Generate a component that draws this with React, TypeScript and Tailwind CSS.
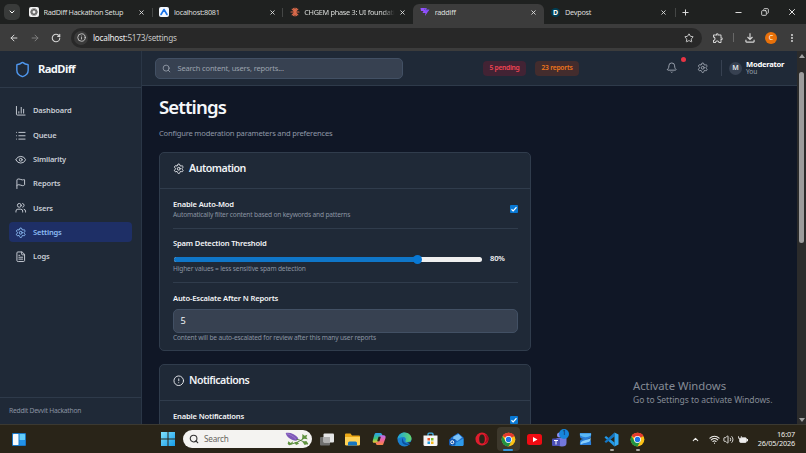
import React from "react";
import {
  ArrowLeft, ArrowRight, RotateCw, Info, Star, EllipsisVertical, X, Plus, Minus, ChevronDown, ChevronUp,
  ChartColumn, List, Eye, Flag, Users, Settings, FileText, Shield, Search, Bell, CircleAlert, Copy, Wifi, Volume2,
} from "lucide-react";
import { MdOutlineExtension, MdOutlineFileDownload } from "react-icons/md";

type Kids = { children?: React.ReactNode };

function Tab({ icon, title, active, wide }: { icon: React.ReactNode; title: React.ReactNode; active?: boolean; wide?: boolean }) {
  return (
    <div
      className={
        "flex h-full w-[130.4px] shrink-0 items-center pl-[7px] pr-[7px] " +
        (active ? "mt-[8px] rounded-t-[6px] bg-[#3c3c3c] pb-[8px]" : "")
      }
    >
      <div className="flex w-[10px] shrink-0 justify-center">{icon}</div>
      <div
        className={
          "ml-[4.5px] flex-1 overflow-hidden text-[7.3px] leading-[12px] tracking-[-0.27px] whitespace-nowrap text-[#dcdedc] " +
          (wide ? "mr-[4px] [mask-image:linear-gradient(to_right,black_85%,transparent)]" : "")
        }
      >
        {title}
      </div>
      <X className="size-[7px] shrink-0 text-[#e2e2e2]" strokeWidth={3} />
    </div>
  );
}

function TabStrip() {
  return (
    <div className="flex h-[24px] shrink-0 items-center overflow-hidden bg-[#1f2120]">
      <div className="ml-[4px] flex size-[16px] items-center justify-center rounded-[5px] bg-[#393b3a]">
        <ChevronDown className="size-[8px] text-white" strokeWidth={3} />
      </div>
      <div className="flex h-full items-center pl-[2px]">
        <Tab
          title="RadDiff Hackathon Setup"
          icon={
            <svg viewBox="0 0 20 20" className="size-[10px]">
              <rect width="20" height="20" rx="4" fill="#f1f1f1" />
              <g fill="none" stroke="#555" strokeWidth="1.5">
                <ellipse cx="10" cy="10" rx="7" ry="4" />
                <ellipse cx="10" cy="10" rx="7" ry="4" transform="rotate(60 10 10)" />
                <ellipse cx="10" cy="10" rx="7" ry="4" transform="rotate(120 10 10)" />
              </g>
            </svg>
          }
        />
        <div className="-mx-[0.5px] h-[9px] w-px bg-[#444645]" />
        <Tab
          title="localhost:8081"
          icon={
            <svg viewBox="0 0 20 20" className="size-[10px]">
              <rect width="20" height="20" rx="4" fill="#f4f8ff" />
              <path d="M4 15 10 5l6 10" fill="none" stroke="#1a73e8" strokeWidth="3.2" strokeLinejoin="round" strokeLinecap="round" />
            </svg>
          }
        />
        <div className="-mx-[0.5px] h-[9px] w-px bg-[#444645]" />
        <Tab
          wide
          title="CHGEM phase 3: UI foundation"
          icon={
            <svg viewBox="0 0 20 20" className="size-[10px]" stroke="#d9694a" strokeWidth="2.2" strokeLinecap="round">
              <path d="M10 2v16M2 10h16M4.3 4.3l11.4 11.4M15.7 4.3 4.3 15.7M7 2.8l6 14.4M13 2.8 7 17.2" />
            </svg>
          }
        />
        <Tab
          active
          title="raddiff"
          icon={
            <svg viewBox="0 0 20 20" className="size-[10px]">
              <path d="M1 2h9l-1 4h9l-8 12 1-6H5l2-4H2z" fill="#9450ff" />
              <path d="M10 2h4l-2 3h7l-3 4h-6z" fill="#7d4df0" />
            </svg>
          }
        />
        <Tab
          title="Devpost"
          icon={
            <div className="flex size-[9px] items-center justify-center rounded-full bg-[#003e54] text-[7px] leading-none font-bold text-white">D</div>
          }
        />
      </div>
      <div className="ml-px h-[9px] w-px bg-[#444645]" />
      <Plus className="ml-[5px] size-[9px] text-[#dedede]" strokeWidth={2.6} />
      <div className="ml-auto flex items-center gap-[18px] pr-[9px] text-[#e6e6e6]">
        <Minus className="size-[9px]" strokeWidth={2.5} />
        <Copy className="size-[8px] -scale-x-100" strokeWidth={2.6} />
        <X className="size-[10px]" strokeWidth={2.4} />
      </div>
    </div>
  );
}

function Toolbar() {
  return (
    <div className="flex h-[27px] shrink-0 items-center bg-[#3c3c3c] text-[#d6d6d6]">
      <ArrowLeft className="ml-[9px] size-[10px]" strokeWidth={2.4} />
      <ArrowRight className="ml-[11px] size-[10px] text-[#7d7d7d]" strokeWidth={2.4} />
      <RotateCw className="ml-[11px] size-[10px]" strokeWidth={2.6} />
      <div className="ml-[10px] flex h-[20px] w-[631px] items-center rounded-full bg-[#282828] pr-[8px] pl-[3px]">
        <div className="flex size-[14px] items-center justify-center rounded-full bg-[#3a3a3a]">
          <Info className="size-[9px]" strokeWidth={2.2} />
        </div>
        <div className="ml-[5px] flex-1 text-[8.2px] leading-[12px] tracking-[-0.24px] text-[#c4c4c4]">
          <span className="text-[#ededed]">localhost:</span>5173/settings
        </div>
        <Star className="size-[10px]" strokeWidth={2.2} />
      </div>
      <MdOutlineExtension className="ml-[10px] size-[12px]" />
      <div className="ml-[9px] h-[9px] w-px bg-[#686868]" />
      <MdOutlineFileDownload className="ml-[9px] size-[14px]" />
      <div className="ml-[8px] flex size-[12px] items-center justify-center rounded-full bg-[#e8710a] text-[7px] leading-none text-white">C</div>
      <EllipsisVertical className="ml-[10px] size-[10px]" strokeWidth={3} />
    </div>
  );
}

const nav = [
  { icon: ChartColumn, label: "Dashboard" },
  { icon: List, label: "Queue" },
  { icon: Eye, label: "Similarity" },
  { icon: Flag, label: "Reports" },
  { icon: Users, label: "Users" },
  { icon: Settings, label: "Settings" },
  { icon: FileText, label: "Logs" },
];

function Sidebar() {
  return (
    <aside className="flex w-[142px] shrink-0 flex-col border-r border-[#2a3646] bg-[#1f2937]">
      <div className="flex h-[37px] shrink-0 items-center border-b border-[#2e3a4a] pl-[14px]">
        <Shield className="size-[17px] text-[#4f97ee]" strokeWidth={2} />
        <span className="ml-[7px] pt-px text-[11.2px] font-bold tracking-[-0.6px] text-[#f5f7fa]">RadDiff</span>
      </div>
      <nav className="flex flex-1 flex-col gap-[4.3px] pt-[13px] pr-[9px] pl-[9px]">
        {nav.map(({ icon: Icon, label }) => (
          <div
            key={label}
            className={
              "flex h-[20px] items-center rounded-[4px] pl-[6px] text-[7.5px] font-semibold tracking-[-0.16px] " +
              (label === "Settings" ? "bg-[#1e2f66] text-[#8dbdf5]" : "text-[#c9ced6]")
            }
          >
            <Icon className="size-[11.5px]" strokeWidth={2} />
            <span className="ml-[6.5px]">{label}</span>
          </div>
        ))}
      </nav>
      <div className="flex h-[27px] shrink-0 items-center border-t border-[#2e3a4a] pt-px pl-[9px] text-[6.7px] tracking-[-0.22px] text-[#8a93a2]">
        Reddit Devvit Hackathon
      </div>
    </aside>
  );
}

function Header() {
  return (
    <header className="flex h-[35px] shrink-0 items-center border-b border-[#2e3a4a] bg-[#1f2937]">
      <div className="ml-[13px] flex h-[21px] w-[248px] items-center rounded-[5px] border border-[#425064] bg-[#374151] pl-[6px]">
        <Search className="size-[9px] text-[#9ca3af]" strokeWidth={2.2} />
        <span className="ml-[6.5px] pt-px text-[7.5px] tracking-[-0.16px] text-[#9ca3af]">Search content, users, reports...</span>
      </div>
      <div className="ml-[80px] flex h-[15px] w-[43px] items-center justify-center rounded-[4px] bg-[#422334] pt-px text-[6.7px] font-semibold tracking-[-0.3px] text-[#f04453]">
        5 pending
      </div>
      <div className="ml-[9px] flex h-[15px] w-[44px] items-center justify-center rounded-[4px] bg-[#432c2d] pt-px text-[6.7px] font-semibold tracking-[-0.22px] text-[#ee761c]">
        23 reports
      </div>
      <div className="relative ml-[87px]">
        <Bell className="size-[11.5px] text-[#9ca3af]" strokeWidth={2} />
        <span className="absolute -top-[5.5px] left-[15px] size-[5px] rounded-full bg-[#e83444]" />
      </div>
      <Settings className="ml-[19px] size-[11.5px] text-[#9ca3af]" strokeWidth={2} />
      <div className="ml-[13px] h-[16px] w-px bg-[#374151]" />
      <div className="ml-[7px] flex size-[13px] items-center justify-center rounded-full bg-[#374151] text-[7px] font-semibold text-[#e3e6ea]">M</div>
      <div className="ml-[4px] flex flex-col">
        <span className="text-[7.6px] leading-[8.5px] font-bold tracking-[-0.25px] text-white">Moderator</span>
        <span className="text-[6.6px] leading-[8px] tracking-[-0.1px] text-[#9ca3af]">You</span>
      </div>
    </header>
  );
}

function Card({ icon, title, children, className }: Kids & { icon: React.ReactNode; title: string; className: string }) {
  return (
    <section className={"w-[372px] shrink-0 rounded-[5px] border border-[#303c4c] bg-[#1f2937] " + className}>
      <div className="flex h-[36px] items-center border-b border-[#303c4c] pb-[4px] pl-[13px] text-[#e5e7eb]">
        {icon}
        <h2 className="ml-[4.5px] text-[10.6px] font-semibold tracking-[-0.48px] text-[#f0f2f5]">{title}</h2>
      </div>
      <div className="pr-[12px] pl-[13px]">{children}</div>
    </section>
  );
}

const Label = ({ children }: Kids) => (
  <div className="text-[7.6px] leading-[11px] font-semibold tracking-[-0.17px] text-[#f3f4f6]">{children}</div>
);
const Hint = ({ children }: Kids) => (
  <div className="text-[6.6px] leading-[10px] tracking-[-0.16px] text-[#8b94a2]">{children}</div>
);
const Check = () => (
  <svg viewBox="0 0 16 16" className="size-[8px]">
    <rect width="16" height="16" rx="2" fill="#0878d4" />
    <path d="m3 8.5 3.3 3.3L13 4.5" fill="none" stroke="#fff" strokeWidth="2.3" />
  </svg>
);

function Content() {
  return (
    <main className="flex min-h-0 flex-1 flex-col overflow-hidden bg-[#101726] pl-[17px]">
      <h1 className="mt-[8px] h-[26px] text-[18.6px] leading-[26px] font-semibold tracking-[-0.9px] text-[#f5f7fa]">Settings</h1>
      <p className="mt-[7px] text-[7.6px] leading-[12px] tracking-[-0.19px] text-[#8f98a6]">Configure moderation parameters and preferences</p>
      <Card className="mt-[13px] h-[199px]" title="Automation" icon={<Settings className="size-[11.5px]" strokeWidth={2} />}>
        <div className="flex h-[40px] items-center justify-between border-b border-[#303c4c]">
          <div className="pt-px">
            <Label>Enable Auto-Mod</Label>
            <Hint>Automatically filter content based on keywords and patterns</Hint>
          </div>
          <Check />
        </div>
        <div className="h-[54px] border-b border-[#303c4c] pt-[9px]">
          <Label>Spam Detection Threshold</Label>
          <div className="mt-[5px] flex h-[10px] items-center pl-px">
            <div className="flex h-[5px] w-[308px] items-center rounded-full bg-[#efefef]">
              <div className="h-[5px] w-[240px] rounded-l-full bg-[#0f76c8]" />
              <div className="-ml-[1px] size-[9px] rounded-full bg-[#0878d4]" />
            </div>
            <span className="ml-[8px] text-[7.6px] font-semibold tracking-[-0.2px] text-[#f3f4f6]">80%</span>
          </div>
          <Hint>Higher values = less sensitive spam detection</Hint>
        </div>
        <div className="pt-[10px]">
          <Label>Auto-Escalate After N Reports</Label>
          <div className="mt-[5px] flex h-[24px] items-center rounded-[5px] border border-[#425064] bg-[#374151] pl-[6.5px] text-[9.2px] text-[#f3f4f6]">5</div>
          <Hint>Content will be auto-escalated for review after this many user reports</Hint>
        </div>
      </Card>
      <Card className="mt-[13px] h-[120px]" title="Notifications" icon={<CircleAlert className="size-[11.5px]" strokeWidth={2} />}>
        <div className="flex h-[38px] items-center justify-between">
          <div className="pt-px pb-[8px]">
            <Label>Enable Notifications</Label>
          </div>
          <Check />
        </div>
      </Card>
    </main>
  );
}

function Scrollbar() {
  return (
    <div className="flex w-[9px] shrink-0 flex-col items-center justify-between bg-[#2b2b2b] py-[3px]">
      <div className="flex flex-col items-center">
        <div className="h-0 w-0 border-x-[3px] border-b-[4px] border-x-transparent border-b-[#a0a0a0]" />
        <div className="mt-[14px] h-[171px] w-[5px] rounded-full bg-[#9c9c9c]" />
      </div>
      <div className="-mb-px h-0 w-0 border-x-[3px] border-t-[4px] border-x-transparent border-t-[#a0a0a0]" />
    </div>
  );
}

const Slot = ({ children }: Kids) => <div className="flex w-[25.9px] shrink-0 items-center justify-center">{children}</div>;

const Chrome = () => (
  <svg viewBox="0 0 48 48" className="size-[15px]">
    <circle cx="24" cy="24" r="22" fill="#fbc116" />
    <path d="M24 24 4.9 13A22 22 0 0 1 43 13z" fill="#e33b2e" />
    <path d="M24 2a22 22 0 0 1 19 11H24z" fill="#e33b2e" />
    <path d="M4.9 13A22 22 0 0 0 24 46l9.5-16.5L14.5 29.5z" fill="#229342" />
    <circle cx="24" cy="24" r="11" fill="#fff" />
    <circle cx="24" cy="24" r="8.5" fill="#1a73e8" />
  </svg>
);

function Taskbar() {
  return (
    <footer className="flex h-[29px] shrink-0 items-center border-t border-[#3b3931] bg-[#292418]">
      <svg viewBox="0 0 28 26" className="ml-[12px] h-[13px] w-[14px]">
        <rect width="28" height="26" rx="2" fill="#1976c5" />
        <rect x="2" y="2" width="11" height="22" rx="1" fill="#f5f9fd" />
        <rect x="15" y="2" width="11" height="12" rx="1" fill="#62cdfa" />
        <rect x="15" y="14" width="11" height="10" rx="1" fill="#2292e8" />
      </svg>
      <svg viewBox="0 0 28 28" className="ml-[135px] size-[14px]">
        <defs>
          <linearGradient id="win" x1="0" y1="0" x2="1" y2="1"><stop stopColor="#7fe0fb" /><stop offset="1" stopColor="#159be8" /></linearGradient>
        </defs>
        <path d="M0 0h13v13H0zM15 0h13v13H15zM0 15h13v13H0zM15 15h13v13H15z" fill="url(#win)" />
      </svg>
      <div className="ml-[8px] flex h-[18px] w-[129px] items-center rounded-full bg-[#f4f3f1] pl-[6px]">
        <Search className="size-[10px] text-[#333]" strokeWidth={2.6} />
        <span className="ml-[5px] flex-1 text-[8.2px] tracking-[-0.2px] text-[#68665f]">Search</span>
        <svg viewBox="0 0 72 42" className="mr-[3px] h-[14px] w-[24px]">
          <path d="M2 3c11-3 29 2 38 16l-6 7C18 25 5 16 2 3z" fill="#7e57b8" />
          <path d="M5 5c10 2 19 7 28 17" stroke="#9b7acb" strokeWidth="3" fill="none" />
          <path d="M35 22c10 1 21 7 33 15M10 36c18 0 35-6 53-24" stroke="#41732b" strokeWidth="2.5" fill="none" />
          <path d="m52 6 7 5 8-3-3 8 4 6-10-2-8 4 2-8zM10 28l7 5 7-5-2 9-9 3-5-5zM28 31l9-2 5 6-9 4zM52 29l12-2 6 8-11 4z" fill="#60923f" />
        </svg>
      </div>
      <div className="flex h-full items-stretch pl-[2px]">
        <Slot>
          <svg viewBox="0 0 28 26" className="h-[13px] w-[14px]"><rect y="8" width="20" height="17" rx="2" fill="#6f6f6e" /><rect x="7" y="1" width="21" height="18" rx="2" fill="#e6e6e6" /><path d="M7 8h13v11H7z" fill="#b0b0b0" /></svg>
        </Slot>
        <Slot>
          <svg viewBox="0 0 30 26" className="h-[13px] w-[15px]"><path d="M0 3q0-2 2-2h9l3 4h14q2 0 2 2v17H0z" fill="#eca816" /><path d="M0 8h30v14q0 3-3 3H3q-3 0-3-3z" fill="#ffd257" /><path d="M6 25v-5q0-3 3-3h12q3 0 3 3v5z" fill="#1676c0" /></svg>
        </Slot>
        <Slot>
          <svg viewBox="0 0 30 30" className="size-[14px]">
            <defs><linearGradient id="cop" x1="0" y1="0" x2="0" y2="1"><stop stopColor="#2a9df4" /><stop offset=".55" stopColor="#3bc77b" /><stop offset="1" stopColor="#f3cb2d" /></linearGradient>
              <linearGradient id="cop2" x1="0" y1="0" x2="0" y2="1"><stop stopColor="#b36ff0" /><stop offset=".5" stopColor="#f0639a" /><stop offset="1" stopColor="#f78a3d" /></linearGradient></defs>
            <path d="M8 2h10q3 0 4 4l1 3h-6l-4 14H5q-5 0-3-6L5 6q1-4 3-4z" fill="url(#cop)" />
            <path d="M22 28H12q-3 0-4-4l-1-2h6l4-15h8q5 0 4 6l-4 11q-1 4-3 4z" fill="url(#cop2)" />
            <path d="m14 10-3 10h5l3-10z" fill="#292418" />
          </svg>
        </Slot>
        <Slot>
          <svg viewBox="0 0 30 30" className="size-[15px]">
            <defs><linearGradient id="edg" x1="0" y1="0" x2="1" y2="0"><stop stopColor="#1ba4e0" /><stop offset="1" stopColor="#65d868" /></linearGradient></defs>
            <circle cx="15" cy="15" r="14" fill="#1a7fcf" />
            <path d="M1 14C2 6 8 1 15 1c8 0 14 6 14 12 0 5-4 7-8 7-3 0-5-1-4-3 2-3 0-7-5-7-5 0-9 2-11 4z" fill="url(#edg)" />
            <path d="M12 12c-5 5-1 14 7 14 3 0 6-1 8-3-2 1-5 1-8 0-5-1-8-6-7-11z" fill="#0d4f9c" />
            <path d="M20 21q6 1 10-3v5l-4 1z" fill="#292418" />
          </svg>
        </Slot>
        <Slot>
          <svg viewBox="0 0 30 30" className="size-[15px]"><path d="M10 8V4q0-2 2-2h6q2 0 2 2v4" fill="none" stroke="#42b3ea" strokeWidth="2.5" /><path d="M1 7h28v18q0 3-3 3H4q-3 0-3-3z" fill="#f5f5f5" /><path d="M9 12h5v5H9z" fill="#e8532b" /><path d="M16 12h5v5h-5z" fill="#7db928" /><path d="M9 19h5v5H9z" fill="#1f9bde" /><path d="M16 19h5v5h-5z" fill="#f6b81c" /></svg>
        </Slot>
        <Slot>
          <svg viewBox="0 0 30 30" className="size-[15px]"><path d="M3 12 18 2l11 9v14q0 3-3 3H7q-3 0-4-3z" fill="#1b6fd0" /><path d="m9 9 10-5 7 7-9 7-9-5z" fill="#7cc4f8" /><path d="m5 26 24-13v12q0 3-3 3H7z" fill="#2f9bea" /><rect y="14" width="13" height="13" rx="2" fill="#1257ae" /><circle cx="6.5" cy="20.5" r="3" fill="none" stroke="#fff" strokeWidth="2" /></svg>
        </Slot>
        <Slot>
          <svg viewBox="0 0 30 30" className="size-[14px]"><circle cx="15" cy="15" r="14" fill="#df1d2d" /><path d="M20 5q9 9 0 20 9-3 9-10T20 5z" fill="#a80d20" /><ellipse cx="15" cy="15" rx="6" ry="9.8" fill="#292418" /></svg>
        </Slot>
        <Slot>
          <div className="flex h-[24px] w-[23px] flex-col items-center justify-between rounded-[4px] bg-[#3d382c] pt-[4.5px]">
            <Chrome />
            <div className="h-[2px] w-[10px] rounded-full bg-[#3497dc]" />
          </div>
        </Slot>
        <Slot>
          <svg viewBox="0 0 30 22" className="h-[11px] w-[15px]"><rect width="30" height="22" rx="5" fill="#f00b12" /><path d="m12 6 9 5-9 5z" fill="#fff" /></svg>
        </Slot>
        <Slot>
          <div className="relative flex">
            <svg viewBox="0 0 30 30" className="size-[15px]"><circle cx="15" cy="6" r="5" fill="#8b8ff0" /><circle cx="25" cy="9" r="4" fill="#6068cf" /><path d="M9 12h20v10q0 7-9 7T9 22z" fill="#7378dc" /><rect y="13" width="16" height="15" rx="2" fill="#4b50b5" /><path d="M4 17h8M8 17v8" stroke="#fff" strokeWidth="2" /></svg>
            <span className="absolute -top-[3px] left-[7px] flex size-[10px] items-center justify-center rounded-full bg-[#1685dc] text-[6.5px] leading-none text-[#10263a]">1</span>
          </div>
        </Slot>
        <Slot>
          <svg viewBox="0 0 28 30" className="h-[14px] w-[13px]"><path d="M2 2h24v6q0 7-8 7 8 0 8 7v6H2v-6q0-7 8-7-8 0-8-7z" fill="#2a80dc" /><path d="M2 3h24v4Q14 15 2 7z" fill="#5bb9f5" /><path d="M3 24c6-9 17-4 22-12v5c-4 8-15 4-20 10z" fill="#8bd0fc" /></svg>
        </Slot>
        <Slot>
          <div className="flex h-full flex-col items-center justify-between pt-[6.5px] pb-[2px]">
            <svg viewBox="0 0 30 30" className="size-[15px]"><path d="M21 21 4 8 1 11l20 18z" fill="#2199e8" /><path d="M21 1 1 19l3 3L21 9z" fill="#1476c4" /><path d="m21 1 8 4v20l-8 4z" fill="#35aaf4" /></svg>
            <div className="h-[2px] w-[4px] rounded-full bg-[#aaa8a2]" />
          </div>
        </Slot>
        <Slot>
          <div className="flex h-full flex-col items-center justify-between pt-[6.5px] pb-[2px]">
            <Chrome />
            <div className="h-[2px] w-[4px] rounded-full bg-[#aaa8a2]" />
          </div>
        </Slot>
      </div>
      <div className="ml-auto flex items-center pr-[11px] text-[#f0efec]">
        <ChevronUp className="size-[9px]" strokeWidth={2.8} />
        <Wifi className="ml-[9px] size-[11px]" strokeWidth={2.4} />
        <Volume2 className="ml-[3px] size-[11px]" strokeWidth={2} />
        <svg viewBox="0 0 24 20" className="ml-[4px] h-[9px] w-[10px]"><rect x="4" y="6" width="16" height="11" rx="2" fill="#eee" stroke="#eee" strokeWidth="2" /><path d="M21 9h3v5h-3z" fill="#eee" /><path d="M1 2v5h7V2" stroke="#eee" strokeWidth="2" fill="#292418" /></svg>
        <div className="flex w-[47px] flex-col items-end text-[7.3px] leading-[9.5px] tracking-[-0.15px] whitespace-nowrap">
          <span>16:07</span>
          <span>26/05/2026</span>
        </div>
      </div>
    </footer>
  );
}

export default function App() {
  return (
    <div className="relative flex h-[453px] w-[806px] flex-col overflow-hidden bg-[#101726] font-['Noto_Sans','Open_Sans',sans-serif]">
      <TabStrip />
      <Toolbar />
      <div className="flex min-h-0 flex-1">
        <Sidebar />
        <div className="flex min-w-0 flex-1 flex-col">
          <Header />
          <Content />
        </div>
        <Scrollbar />
      </div>
      <Taskbar />
      <div className="absolute top-[379px] left-[633px] text-[#858b95]">
        <div className="text-[11.3px] leading-[14px] tracking-[-0.02px]">Activate Windows</div>
        <div className="text-[8.5px] leading-[13px] tracking-[-0.04px]">Go to Settings to activate Windows.</div>
      </div>
    </div>
  );
}
